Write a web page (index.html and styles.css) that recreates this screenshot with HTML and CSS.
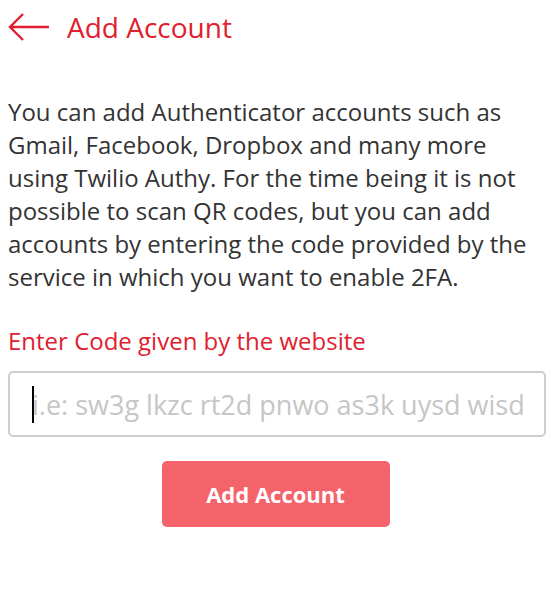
FILE: index.html
```html
<!DOCTYPE html>
<html>
<head>
<meta charset="utf-8">
<link rel="stylesheet" href="styles.css">
</head>
<body>
<div class="page">
  <header class="header">
    <svg class="back" width="42" height="30" viewBox="0 0 42 30">
      <path d="M41 15 H2 M15 2 L2 15 L15 28" fill="none" stroke="#e0202e" stroke-width="2.4"/>
    </svg>
    <h1 class="title">Add Account</h1>
  </header>
  <p class="desc">You can add Authenticator accounts such as Gmail, Facebook, Dropbox and many more using Twilio Authy. For the time being it is not possible to scan QR codes, but you can add accounts by entering the code provided by the service in which you want to enable 2FA.</p>
  <label class="label">Enter Code given by the website</label>
  <div class="input">
    <span class="caret"></span><span class="placeholder">i.e: sw3g lkzc rt2d pnwo as3k uysd wisd</span>
  </div>
  <div class="actions">
    <button class="btn">Add Account</button>
  </div>
</div>
</body>
</html>
```
FILE: styles.css
```css
* { box-sizing: border-box; }
html, body { margin: 0; padding: 0; background: #fff; }
body { font-family: "Open Sans", "Noto Sans", sans-serif; }
.page { padding: 0 13px 0 8px; }
.header { display: flex; align-items: center; height: 54px; gap: 17px; }
.back { display: block; }
.title { margin: 0; font-size: 28px; font-weight: 400; color: #e0202e; }
.desc { margin: 41px 0 0; font-size: 24px; line-height: 33px; color: #333; }
.label { display: block; margin-top: 33px; font-size: 24px; line-height: 30px; color: #e0202e; }
.input { margin-top: 15px; height: 66px; border: 2px solid #cdcdcd; border-radius: 5px; display: flex; align-items: center; padding-left: 22px; font-size: 27px; }
.caret { width: 2px; height: 37px; background: #000; margin-right: -2px; }
.placeholder { color: #c6c6c6; white-space: nowrap; overflow: hidden; }
.actions { display: flex; justify-content: center; margin-top: 24px; padding-right: 3px; }
.btn { width: 228px; height: 66px; border: 0; border-radius: 5px; background: #f4636a; color: #fff; font-family: "Open Sans", sans-serif; font-weight: 700; font-size: 22px; }
```
